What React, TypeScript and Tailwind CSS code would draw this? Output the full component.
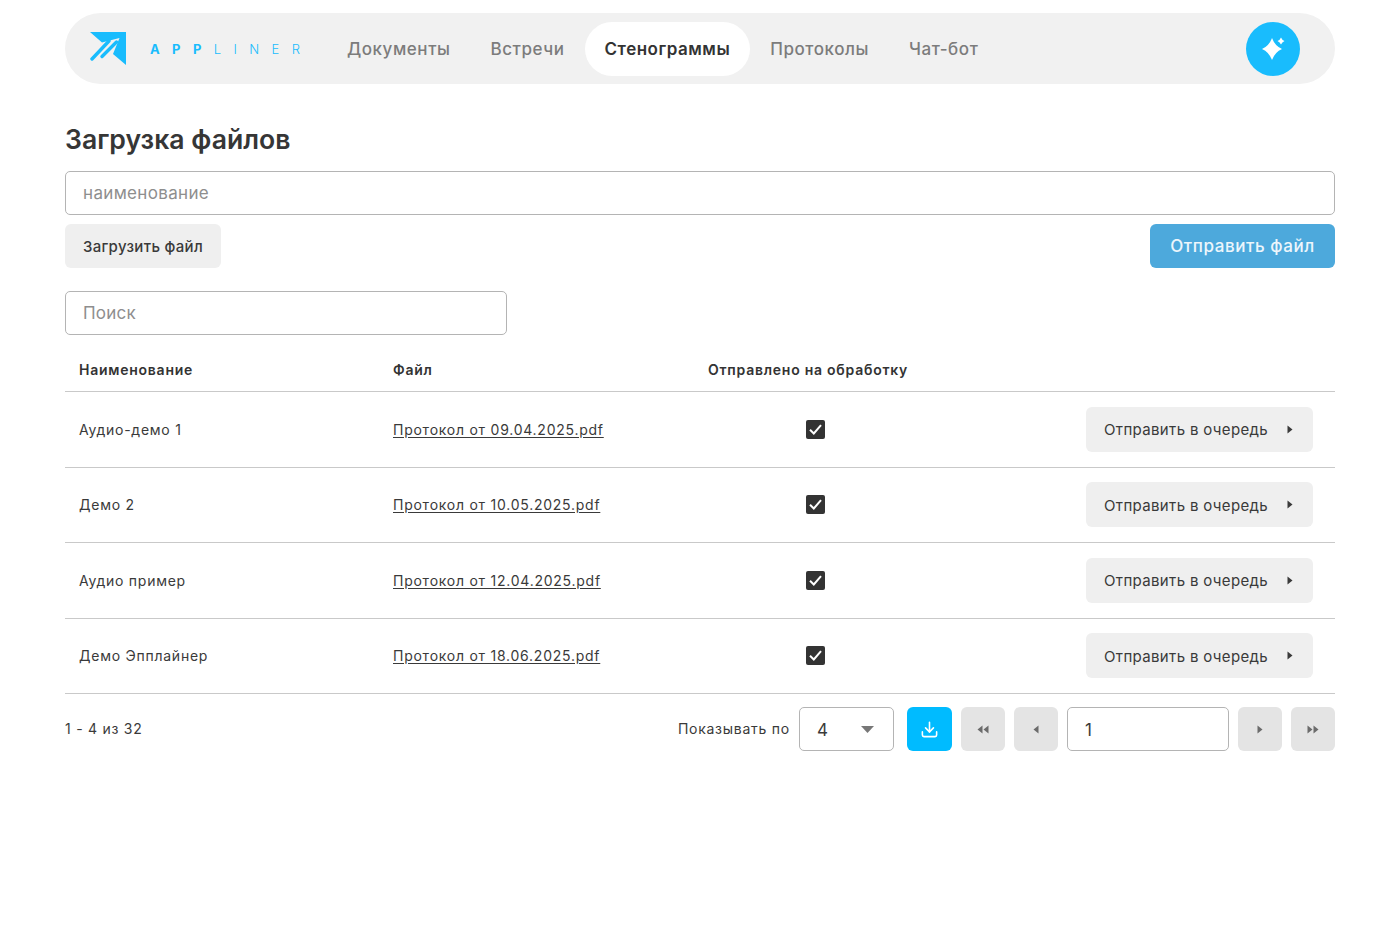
import { Download } from "lucide-react";

const NAV = ["Документы", "Встречи", "Стенограммы", "Протоколы", "Чат-бот"];

const ROWS = [
  { name: "Аудио-демо 1", file: "Протокол от 09.04.2025.pdf" },
  { name: "Демо 2", file: "Протокол от 10.05.2025.pdf" },
  { name: "Аудио пример", file: "Протокол от 12.04.2025.pdf" },
  { name: "Демо Эпплайнер", file: "Протокол от 18.06.2025.pdf" },
];

function Logo() {
  return (
    <svg width="36" height="33" viewBox="0 0 36 33" className="shrink-0">
      <path d="M0 0H36V33L23 22L29.5 6L12 10.5Z" fill="#19bcfd" />
      <path d="M2 27L19 9" stroke="#19bcfd" strokeWidth="3.4" strokeLinecap="round" />
      <path d="M12 24.5L26.5 10" stroke="#19bcfd" strokeWidth="3.4" strokeLinecap="round" />
    </svg>
  );
}

function Sparkle() {
  return (
    <svg width="26" height="26" viewBox="0 0 26 26" fill="white">
      <path d="M12 2Q15 10 22 13Q15 16 12 24Q9 16 2 13Q9 10 12 2Z" />
      <path d="M21 1.5Q22 4 24.5 5Q22 6 21 8.5Q20 6 17.5 5Q20 4 21 1.5Z" />
    </svg>
  );
}

function Tri({ dir = "right", color = "#3a3a3a" }: { dir?: "left" | "right"; color?: string }) {
  return (
    <svg width="6" height="9" viewBox="0 0 6 9" fill={color} className={dir === "left" ? "rotate-180" : ""}>
      <path d="M0.5 0.5L5.5 4.5L0.5 8.5Z" />
    </svg>
  );
}

function PageBtn({ double, dir }: { double?: boolean; dir: "left" | "right" }) {
  return (
    <button className="w-[44px] h-[44px] rounded-md bg-[#e4e4e4] flex items-center justify-center">
      <Tri dir={dir} color="#6b6b6b" />
      {double && <Tri dir={dir} color="#6b6b6b" />}
    </button>
  );
}

export default function App() {
  return (
    <div className="min-h-[933px] bg-white px-[65px] pt-[13px] font-['Inter',sans-serif] text-[#3a3a3a]">
      <nav className="h-[71px] rounded-full bg-[#f1f1f1] flex items-center pl-[25px] pr-[35px]">
        <Logo />
        <div className="ml-[24px] w-[153px] pt-[2px] text-[13px] text-[#19bcfd] tracking-[12.4px] whitespace-nowrap shrink-0">
          <span className="font-bold">APP</span>
          <span className="font-light">LINER</span>
        </div>
        <div className="ml-[24px] flex items-center">
          {NAV.map((item) => (
            <a
              key={item}
              className={
                item === "Стенограммы"
                  ? "h-[54px] px-5 pt-[2px] flex items-center rounded-full bg-white text-[17px] tracking-[0.5px] font-semibold text-[#333]"
                  : "h-[54px] px-5 pt-[2px] flex items-center text-[17px] tracking-[0.55px] font-medium text-[#7c7c7c]"
              }
            >
              {item}
            </a>
          ))}
        </div>
        <button className="ml-auto w-[54px] h-[54px] rounded-full bg-[#19bcfd] flex items-center justify-center">
          <Sparkle />
        </button>
      </nav>

      <h1 className="mt-[37px] text-[26.6px] leading-[36px] font-semibold text-[#363636]">Загрузка файлов</h1>

      <input
        placeholder="наименование"
        className="mt-[14px] block w-full h-[44px] px-[17px] text-[17px] tracking-[0.33px] rounded-[5px] border border-[#b4b4b4] bg-white outline-none placeholder:text-[#8e8e8e]"
      />

      <div className="mt-[9px] flex justify-between">
        <button className="h-[44px] w-[156px] pt-[2px] rounded-md bg-[#efefef] text-[15px] tracking-[0.3px] font-medium text-[#3a3a3a]">Загрузить файл</button>
        <button className="h-[44px] w-[185px] pt-[2px] rounded-md bg-[#4da9dc] text-[17px] tracking-[0.57px] font-medium text-white/90">Отправить файл</button>
      </div>

      <input
        placeholder="Поиск"
        className="mt-[23px] block w-[442px] h-[44px] px-[17px] text-[17px] tracking-[0.2px] rounded-[5px] border border-[#b4b4b4] bg-white outline-none placeholder:text-[#8e8e8e]"
      />

      <div className="mt-[13px] h-[44px] flex items-center border-b border-[#c9c9c9] text-[14px] font-semibold tracking-[0.75px] text-[#333]">
        <div className="w-[314px] pl-[14px]">Наименование</div>
        <div className="w-[315px] pl-[14px]">Файл</div>
        <div className="pl-[14px]">Отправлено на обработку</div>
      </div>

      {ROWS.map((row) => (
        <div key={row.name} className="h-[75.5px] flex items-center border-b border-[#c9c9c9] text-[14px] tracking-[0.75px]">
          <div className="w-[314px] pl-[14px]">{row.name}</div>
          <div className="w-[315px] pl-[14px]">
            <a className="underline underline-offset-2">{row.file}</a>
          </div>
          <div className="w-[243px] flex justify-center">
            <span className="w-[19px] h-[19px] rounded-[2px] bg-[#333] flex items-center justify-center">
              <svg width="19" height="19" viewBox="0 0 19 19" fill="none" stroke="white" strokeWidth="2">
                <path d="M4 9.8L7.8 13.5L15 5.2" />
              </svg>
            </span>
          </div>
          <button className="ml-auto mr-[22px] w-[227px] h-[45px] rounded-md bg-[#efefef] flex items-center pl-[18px] pr-[20px] justify-between text-[15px] tracking-[0.35px] text-[#3a3a3a]">
            <span className="pt-[2px]">Отправить в очередь</span>
            <Tri />
          </button>
        </div>
      ))}

      <div className="mt-[13px] flex items-center text-[14px] tracking-[0.75px]">
        <span className="pb-[2px]">1 - 4 из 32</span>
        <span className="ml-auto mr-[9px] pb-[2px]">Показывать по</span>
        <div className="w-[95px] h-[44px] rounded-[5px] border border-[#b4b4b4] flex items-center justify-between pl-[17px] pr-[19px] text-[17px]">
          <span className="pt-[3px]">4</span>
          <svg width="13" height="7" viewBox="0 0 13 7" fill="#777"><path d="M0 0H13L6.5 7Z" /></svg>
        </div>
        <button className="ml-[13px] w-[45px] h-[44px] rounded-md bg-[#00bbff] flex items-center justify-center">
          <Download size={19} color="white" strokeWidth={2} />
        </button>
        <div className="ml-[9px] flex items-center gap-[9px]">
          <PageBtn double dir="left" />
          <PageBtn dir="left" />
          <input
            defaultValue="1"
            className="w-[162px] h-[44px] px-[17px] pt-[2px] text-[17px] rounded-[5px] border border-[#b4b4b4] outline-none"
          />
          <PageBtn dir="right" />
          <PageBtn double dir="right" />
        </div>
      </div>
    </div>
  );
}
